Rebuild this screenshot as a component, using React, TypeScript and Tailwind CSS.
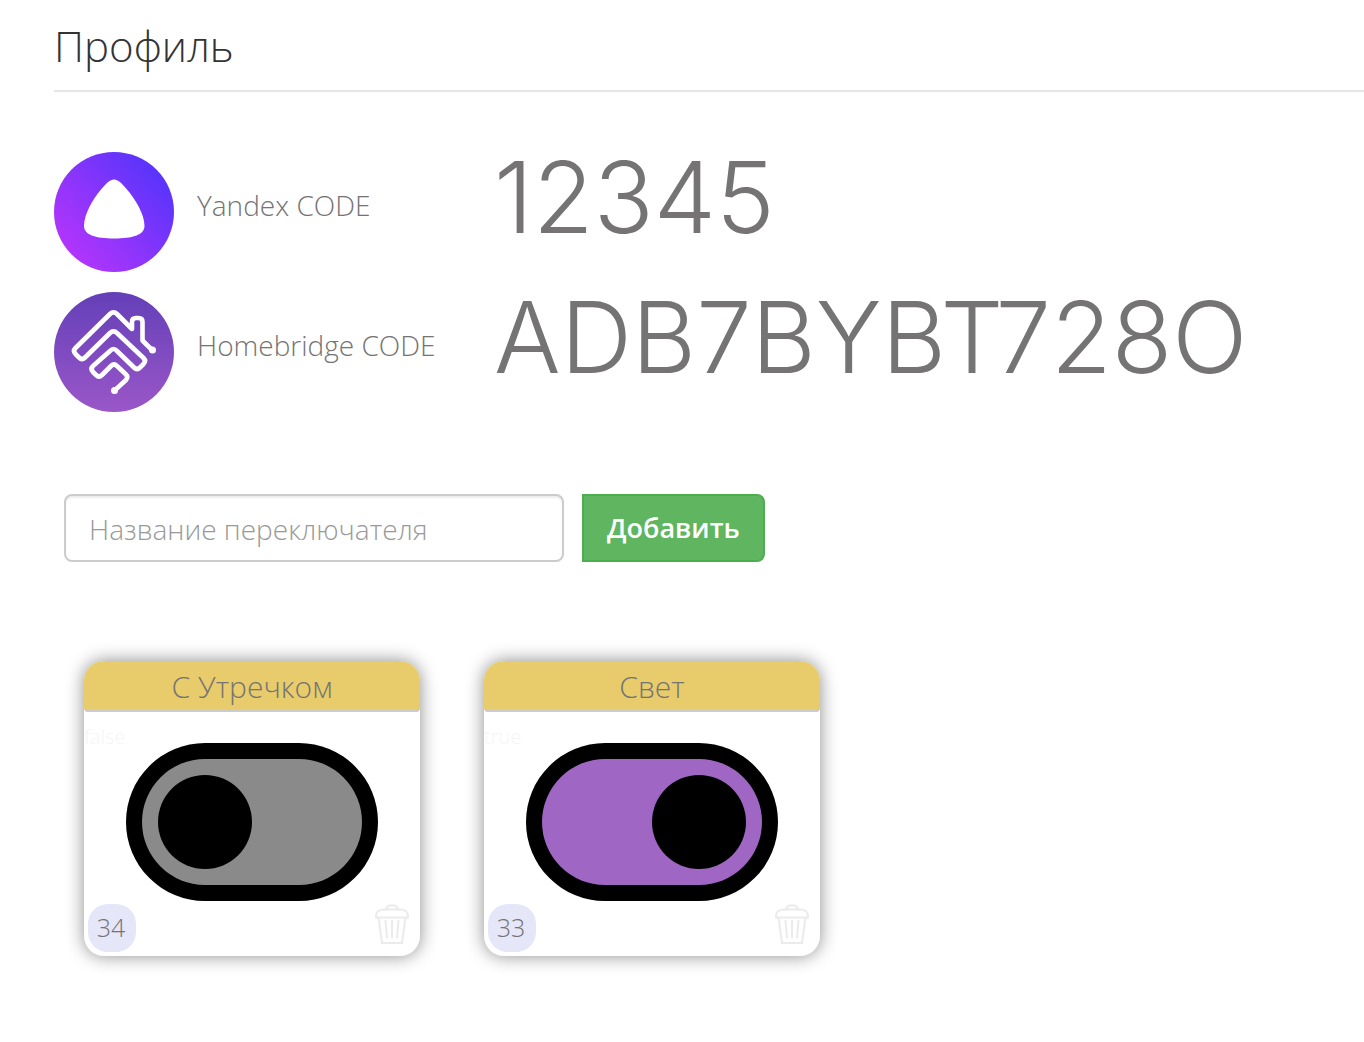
import { useState } from "react";

function AliceLogo() {
  return (
    <svg viewBox="0 0 120 120" className="size-30 shrink-0" aria-hidden="true">
      <defs>
        <linearGradient id="alice" x1="0.1" y1="0.9" x2="0.9" y2="0.2">
          <stop offset="0" stopColor="#b735fb" />
          <stop offset="1" stopColor="#5a34fc" />
        </linearGradient>
      </defs>
      <circle cx="60" cy="60" r="60" fill="url(#alice)" />
      <path
        d="M60 27.5C64 27.5 67.500 31 73 37.500C81 47 90.500 62 90.500 74C90.500 83 78 86.500 60 86.500C42 86.500 30 83 30 74C30 62 39 47 47 37.500C52.500 31 56 27.500 60 27.500Z"
        fill="#fff"
      />
    </svg>
  );
}

function HomebridgeLogo() {
  return (
    <svg viewBox="0 0 120 120" className="size-30 shrink-0" aria-hidden="true">
      <defs>
        <linearGradient id="homebridge" x1="0" y1="0" x2="0" y2="1">
          <stop offset="0" stopColor="#643fb8" />
          <stop offset="1" stopColor="#9a57c8" />
        </linearGradient>
      </defs>
      <circle cx="60" cy="60" r="60" fill="url(#homebridge)" />
      <g fill="none" stroke="#fff" strokeWidth="4.6" strokeLinecap="round" strokeLinejoin="round">
        <path d="M98 58L88.500 48.500V30Q88.500 26 84.500 26H82Q78 26 78 30V37L63 22Q59.500 18.500 56 22L21.500 56Q18.500 59 21.500 62L25 65.500Q28 68.500 31 65.500L56 41Q59.500 37.500 63 41L89.500 66Q92.500 69 89.500 72L86 75.500Q83 78.500 80 75.500L63 59Q59.500 55 56 59L39 74Q36 77 39 80L42 83Q45 86 48 83L57 74Q60 71 63 74L72 82.500Q74.500 85 72 88L60 99" />
      </g>
      <circle cx="98.500" cy="58" r="3.500" fill="#fff" />
      <circle cx="60.500" cy="98.500" r="3.500" fill="#fff" />
    </svg>
  );
}

function TrashIcon() {
  return (
    <svg
      viewBox="0 0 36 40"
      className="h-10 w-9"
      fill="none"
      stroke="currentColor"
      strokeWidth="2"
      strokeLinecap="round"
      strokeLinejoin="round"
      aria-hidden="true"
    >
      <path d="M12.500 5.500V5Q12.500 1.500 16 1.500H20Q23.500 1.500 23.500 5V5.500" />
      <path d="M2 13.500V12Q2 5.500 10 5.500H26Q34 5.500 34 12V13.500Z" />
      <path d="M4.500 13.500L8 39H28L31.500 13.500M11.500 17L13 33.500M18 17V33.500M24.500 17L23 33.500" />
    </svg>
  );
}

type Item = { id: number; name: string; on: boolean };

function SwitchCard({
  item,
  onToggle,
  onDelete,
}: {
  item: Item;
  onToggle: () => void;
  onDelete: () => void;
}) {
  return (
    <li className="flex w-84 flex-col overflow-hidden rounded-[20px] bg-white shadow-[0_0_18px_rgba(0,0,0,0.45)]">
      <h2 className="rounded-b-[4px] border-b-2 border-[#ccc] bg-[#e8cb6a] pt-[3px] text-center text-[30px] leading-[46px]">
        {item.name}
      </h2>
      <div className="grid justify-items-center pt-[11px]">
        <span className="col-start-1 row-start-1 justify-self-start text-[20px] leading-7 text-[#f5f5f5]">
          {String(item.on)}
        </span>
        <label className="col-start-1 row-start-1 mt-5 cursor-pointer">
          <input
            type="checkbox"
            role="switch"
            className="sr-only"
            aria-label={item.name}
            checked={item.on}
            onChange={onToggle}
          />
          <svg viewBox="0 0 252 158" className="w-63" aria-hidden="true">
            <rect width="252" height="158" rx="79" fill="#000" />
            <rect x="16" y="16" width="220" height="126" rx="63" fill={item.on ? "#a066c4" : "#8a8a8a"} />
            <circle cx={item.on ? 173 : 79} cy="79" r="47" fill="#000" />
          </svg>
        </label>
      </div>
      <div className="flex items-start justify-between px-1 pt-[3px] pb-1">
        <span className="size-12 rounded-[20px] bg-[#e5e6f8] pr-0.5 text-center text-[25px] leading-[46px]">
          {item.id}
        </span>
        <button type="button" aria-label="Удалить" onClick={onDelete} className="mr-1.5 cursor-pointer text-[#ebebeb]">
          <TrashIcon />
        </button>
      </div>
    </li>
  );
}

const codes = [
  { label: "Yandex CODE", value: "12345", Logo: AliceLogo },
  { label: "Homebridge CODE", value: "ADB7BYBT728O", Logo: HomebridgeLogo },
];

export default function App() {
  const [name, setName] = useState("");
  const [items, setItems] = useState<Item[]>([
    { id: 34, name: "С Утречком", on: false },
    { id: 33, name: "Свет", on: true },
  ]);

  return (
    <main className="min-h-screen bg-white pt-4 pl-[54px] font-['Open_Sans',sans-serif] text-[28px] font-light text-[#757374]">
      <h1 className="border-b-2 border-[#e5e5e5] pb-3.5 text-[42px] leading-[60px] text-[#333]">Профиль</h1>

      <dl className="mt-15 flex flex-col gap-5">
        {codes.map(({ label, value, Logo }) => (
          <div key={label} className="flex h-30 items-start">
            <Logo />
            <dt className="w-80 shrink-0 pt-8 pl-[23px] leading-[42px]">{label}</dt>
            <dd className="font-['Inter','Liberation_Sans',sans-serif] text-[99px] leading-[90px]">{value}</dd>
          </div>
        ))}
      </dl>

      <form
        className="mt-[82px] ml-2.5 flex gap-[18px]"
        onSubmit={(e) => {
          e.preventDefault();
          if (!name.trim()) return;
          setItems([...items, { id: Math.max(32, ...items.map((i) => i.id)) + 1, name: name.trim(), on: false }]);
          setName("");
        }}
      >
        <input
          type="text"
          value={name}
          onChange={(e) => setName(e.target.value)}
          aria-label="Название переключателя"
          placeholder="Название переключателя"
          className="h-17 w-125 rounded-lg border-2 border-[#ccc] px-[23px] pt-0.5 shadow-[inset_0_2px_2px_rgba(0,0,0,0.075)] placeholder:text-[#999]"
        />
        <button
          type="submit"
          className="h-17 cursor-pointer rounded-r-lg border-2 border-[#4cae4c] bg-[#5fb560] px-[23px] text-[27px] font-semibold text-white"
        >
          Добавить
        </button>
      </form>

      <ul className="mt-[99px] ml-[30px] flex flex-wrap gap-16 pb-16">
        {items.map((item) => (
          <SwitchCard
            key={item.id}
            item={item}
            onToggle={() => setItems(items.map((i) => (i.id === item.id ? { ...i, on: !i.on } : i)))}
            onDelete={() => setItems(items.filter((i) => i.id !== item.id))}
          />
        ))}
      </ul>
    </main>
  );
}
